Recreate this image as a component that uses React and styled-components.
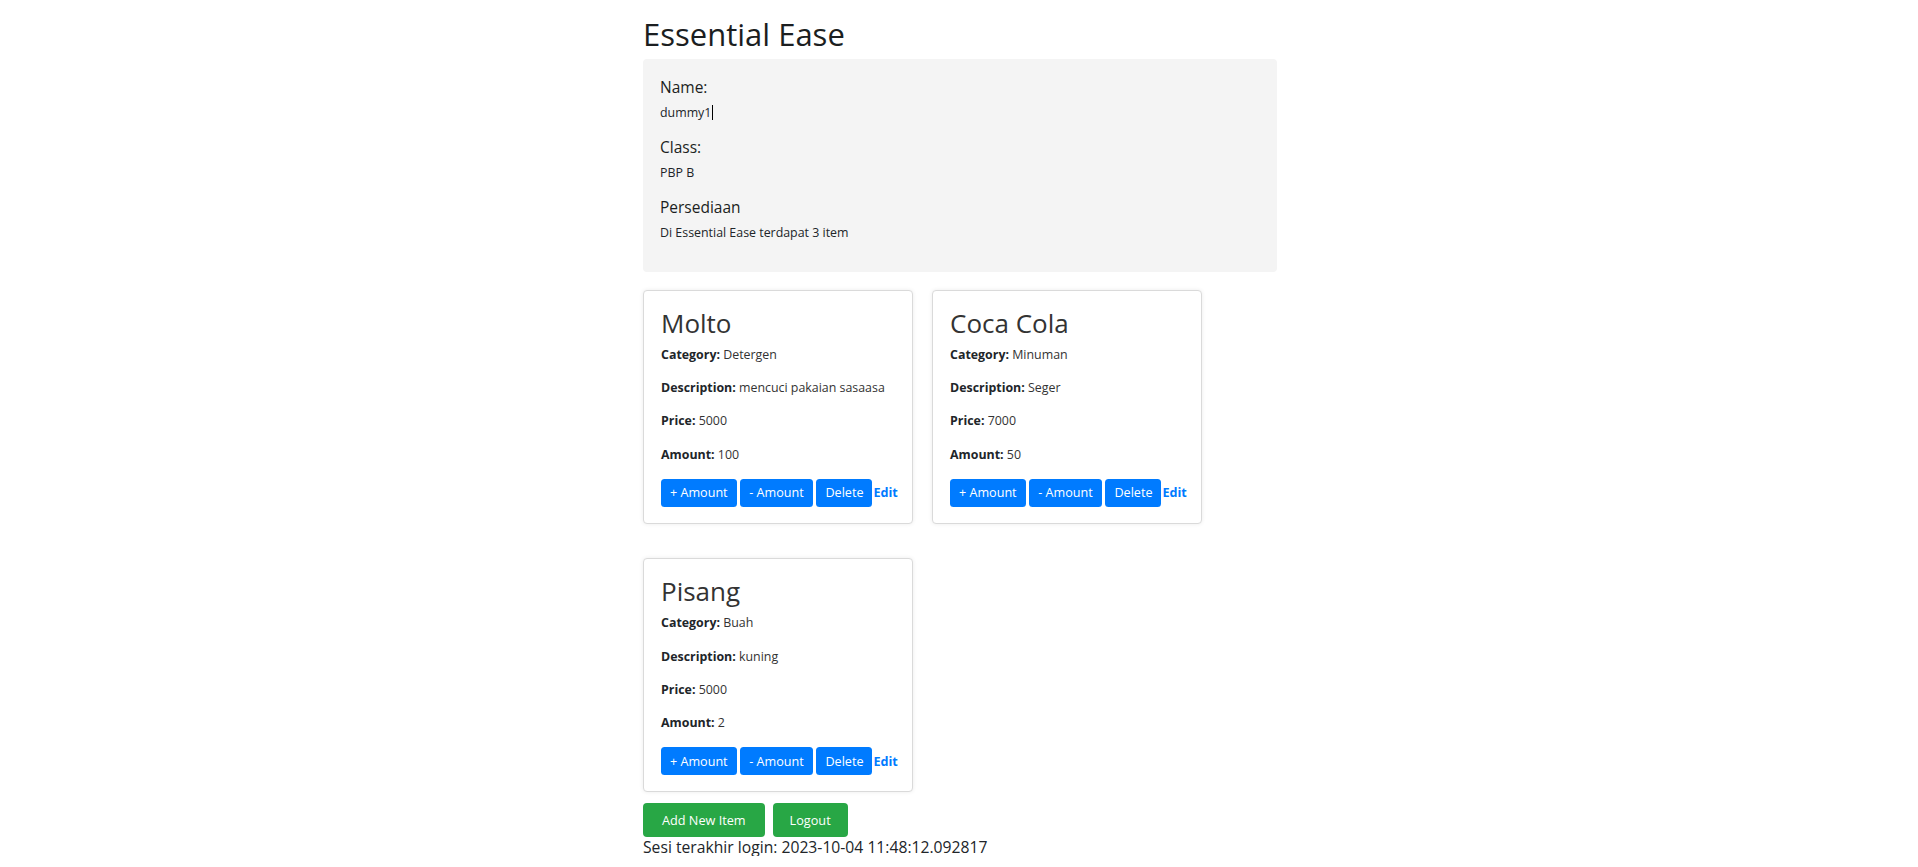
import React from 'react';
import styled, { createGlobalStyle } from 'styled-components';

const GlobalStyle = createGlobalStyle`
  * { box-sizing: border-box; }
  body {
    margin: 0;
    background: #fff;
    color: #212529;
    font-family: "Open Sans", "Noto Sans", sans-serif;
  }
`;

const items = [
  { name: 'Molto', category: 'Detergen', description: 'mencuci pakaian sasaasa', price: 5000, amount: 100 },
  { name: 'Coca Cola', category: 'Minuman', description: 'Seger', price: 7000, amount: 50 },
  { name: 'Pisang', category: 'Buah', description: 'kuning', price: 5000, amount: 2 },
];

function App() {
  return (
    <>
      <GlobalStyle />
      <Container>
        <Title>Essential Ease</Title>

        <InfoBox>
          <Label>Name:</Label>
          <Text>dummy1<Caret /></Text>
          <Label>Class:</Label>
          <Text>PBP B</Text>
          <Label>Persediaan</Label>
          <Text>Di Essential Ease terdapat {items.length} item</Text>
        </InfoBox>

        <CardGrid>
          {items.map((item) => (
            <Card key={item.name}>
              <CardTitle>{item.name}</CardTitle>
              <Field><b>Category:</b> {item.category}</Field>
              <Field><b>Description:</b> {item.description}</Field>
              <Field><b>Price:</b> {item.price}</Field>
              <Field><b>Amount:</b> {item.amount}</Field>
              <Actions>
                <SmallButton>+ Amount</SmallButton>
                <SmallButton>- Amount</SmallButton>
                <SmallButton $tight>Delete</SmallButton>
                <EditLink href="#">Edit</EditLink>
              </Actions>
            </Card>
          ))}
        </CardGrid>

        <Footer>
          <GreenButton $pad={19}>Add New Item</GreenButton>
          <GreenButton $pad={17}>Logout</GreenButton>
        </Footer>
        <LastLogin>Sesi terakhir login: 2023-10-04 11:48:12.092817</LastLogin>
      </Container>
    </>
  );
}

export default App;

const Container = styled.div`
  width: 634px;
  margin-left: calc(50% - 316px);
`;

const Title = styled.h1`
  font-size: 31px;
  line-height: 37.2px;
  font-weight: 500;
  margin: 16px 0 6px;
  color: #1b1e21;
`;

const InfoBox = styled.div`
  background: #f4f4f4;
  border-radius: 4px;
  padding: 18px 17px 16px;
`;

const Label = styled.h5`
  font-size: 15.5px;
  line-height: 20px;
  font-weight: 500;
  margin: 0 0 7.2px;
  color: #1b1e21;
`;

const Text = styled.p`
  font-size: 12.4px;
  line-height: 18px;
  margin: 0 0 14.5px;
  color: #212529;
`;

const Caret = styled.span`
  display: inline-block;
  width: 1px;
  height: 15px;
  background: #000;
  vertical-align: -3px;
  margin-left: 1px;
`;

const CardGrid = styled.div`
  display: flex;
  flex-wrap: wrap;
  column-gap: 19px;
  row-gap: 34.3px;
  margin-top: 17.7px;
`;

const Card = styled.div`
  width: 270px;
  border: 1px solid #dadada;
  border-radius: 4px;
  box-shadow: 0 0 4px rgba(0, 0, 0, 0.08);
  padding: 17px 17px 16.3px;
  background: #fff;
`;

const CardTitle = styled.h2`
  font-size: 26px;
  line-height: 31.2px;
  font-weight: 500;
  color: #333;
  margin: 0 0 6.7px;
`;

const Field = styled.p`
  font-size: 12.4px;
  line-height: 18px;
  margin: 0 0 15.3px;
  color: #333;

  b {
    font-weight: 700;
    color: #212529;
  }
`;

const Actions = styled.div`
  display: flex;
  align-items: center;
  white-space: nowrap;
`;

const SmallButton = styled.button`
  flex-shrink: 0;
  height: 27.7px;
  padding: 0 9px;
  margin-right: ${(p) => (p.$tight ? '1px' : '3.7px')};
  border: none;
  border-radius: 3.5px;
  background: #007bff;
  color: #fff;
  font-family: inherit;
  font-size: 12.6px;
  white-space: nowrap;
  cursor: pointer;
`;

const EditLink = styled.a`
  flex-shrink: 0;
  color: #007bff;
  font-weight: 700;
  font-size: 12.6px;
  text-decoration: none;
`;

const Footer = styled.div`
  display: flex;
  gap: 8px;
  margin-top: 10.8px;
`;

const GreenButton = styled.button`
  height: 33.4px;
  padding: 0 ${(p) => p.$pad}px;
  border: none;
  border-radius: 4px;
  background: #28a745;
  color: #fff;
  font-family: inherit;
  font-size: 12.7px;
  white-space: nowrap;
  cursor: pointer;
`;

const LastLogin = styled.div`
  font-size: 15.7px;
  line-height: 18.8px;
  margin-top: 1.1px;
  color: #212529;
`;
